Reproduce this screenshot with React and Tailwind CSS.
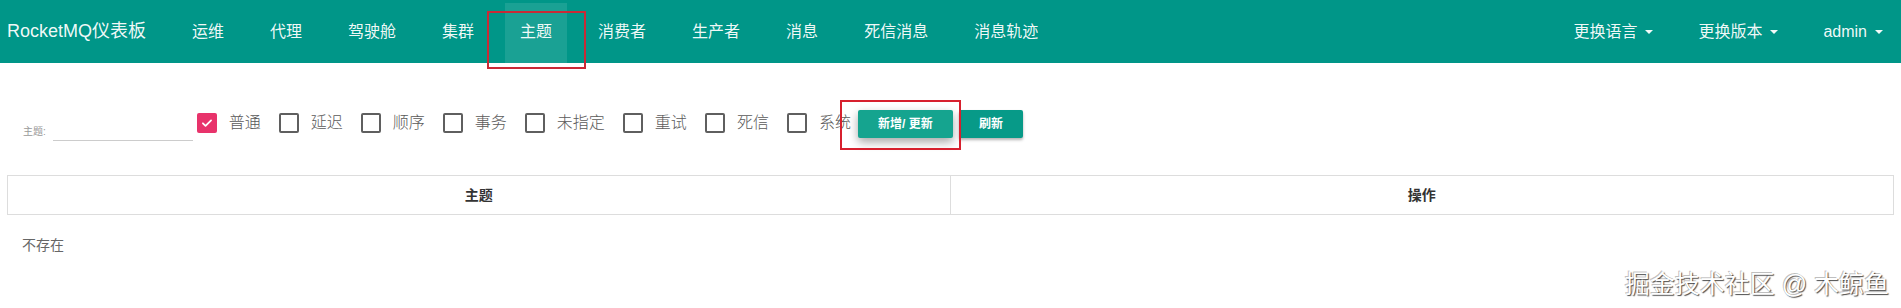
import { useState } from 'react';

const FONT = '"Liberation Sans", "Noto Sans CJK SC", sans-serif';

const NAV_ITEMS = ['运维', '代理', '驾驶舱', '集群', '主题', '消费者', '生产者', '消息', '死信消息', '消息轨迹'];
const RIGHT_ITEMS = ['更换语言', '更换版本', 'admin'];
const TYPES = ['普通', '延迟', '顺序', '事务', '未指定', '重试', '死信', '系统'];

const Caret = () => (
  <span className="ml-[8px] inline-block w-0 h-0 border-t-[4px] border-t-current border-x-[4px] border-x-transparent" />
);

const Checkbox = ({ label, checked, onToggle }) => (
  <label className="flex items-center gap-[12px] mr-[18px] mb-[5px] cursor-pointer" onClick={onToggle}>
    {checked ? (
      <span className="w-[20px] h-[20px] rounded-[2px] bg-[#e8336b] flex items-center justify-center">
        <svg width="14" height="14" viewBox="0 0 24 24" fill="none" stroke="white" strokeWidth="3" strokeLinecap="round" strokeLinejoin="round">
          <path d="M5 12.5l4.5 4.5L19 7.5" />
        </svg>
      </span>
    ) : (
      <span className="w-[20px] h-[20px] rounded-[2px] border-2 border-[#5f5f5f]" />
    )}
    <span className="text-[16px] leading-[20px] font-light text-[#5a5a5a]">{label}</span>
  </label>
);

export default function App() {
  const [checked, setChecked] = useState({ 普通: true });

  return (
    <div className="relative h-[308px] w-full overflow-hidden bg-white" style={{ fontFamily: FONT }}>
      {/* top bar */}
      <nav className="h-[63px] bg-[#009688] flex items-stretch text-white/95">
        <div className="w-[177px] pl-[7px] flex items-center text-[18px]">RocketMQ仪表板</div>
        <ul className="flex gap-[16px]">
          {NAV_ITEMS.map((item) => (
            <li
              key={item}
              className={`relative px-[15px] flex items-center text-[16px] ${item === '主题' ? 'bg-white/10 mt-[3px] pb-[3px]' : ''}`}
            >
              {item}
              {item === '主题' && (
                <span className="absolute left-[-18px] right-[-19px] top-[8px] bottom-[-6px] border-2 border-[#c92a36] pointer-events-none" />
              )}
            </li>
          ))}
        </ul>
        <ul className="ml-auto flex gap-[15px] pr-[3px]">
          {RIGHT_ITEMS.map((item) => (
            <li key={item} className="px-[15px] flex items-center text-[16px]">
              {item}
              <Caret />
            </li>
          ))}
        </ul>
      </nav>

      <div className="px-[7px]">
        {/* filter row */}
        <div className="mt-[47px] pl-[16px] flex items-end">
          <div className="flex items-end mb-[-3px] mr-[4px]">
            <span className="text-[10px] leading-[10px] text-[#999] mb-[4px] mr-[7px]">主题:</span>
            <input className="w-[140px] h-[24px] border-b border-[#ccc] outline-none text-[13px]" />
          </div>
          {TYPES.map((t) => (
            <Checkbox
              key={t}
              label={t}
              checked={!!checked[t]}
              onToggle={() => setChecked({ ...checked, [t]: !checked[t] })}
            />
          ))}
          <div className="flex gap-[6px] ml-[-11px]">
            <div className="relative">
              <button className="w-[95px] h-[28px] rounded-[2px] bg-[#15a48f] text-white text-[12px] font-bold shadow-[0_4px_10px_rgba(0,0,0,0.35)]">
                新增/ 更新
              </button>
              <span className="absolute left-[-18px] right-[-8px] top-[-10px] bottom-[-12px] border-2 border-[#d7202e] pointer-events-none" />
            </div>
            <button className="w-[64px] h-[28px] rounded-[2px] bg-[#079a88] text-white text-[12px] font-bold shadow-[0_2px_3px_rgba(0,0,0,0.3)]">
              刷新
            </button>
          </div>
        </div>

        {/* table */}
        <div className="mt-[37px] border border-[#ddd] grid grid-cols-2 h-[40px]">
          <div className="border-r border-[#ddd] flex items-center justify-center text-[14px] font-bold text-[#333]">主题</div>
          <div className="flex items-center justify-center text-[14px] font-bold text-[#333]">操作</div>
        </div>
        <div className="mt-[20px] pl-[15px] text-[14px] leading-[20px] text-[#666]">不存在</div>
      </div>

      {/* watermark */}
      <div className="absolute right-[12px] bottom-[10px] text-[25px] leading-[28px] text-white [text-shadow:1px_1px_1px_rgba(0,0,0,0.7),-1px_-1px_0_rgba(0,0,0,0.25)]">
        掘金技术社区 @ 木鲸鱼
      </div>
    </div>
  );
}
